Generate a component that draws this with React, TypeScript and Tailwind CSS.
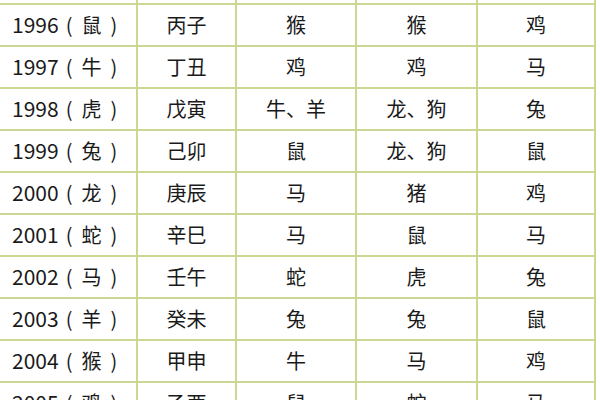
import React from "react";

const rows: string[][] = [
  ["1996", "鼠", "丙子", "猴", "猴", "鸡"],
  ["1997", "牛", "丁丑", "鸡", "鸡", "马"],
  ["1998", "虎", "戊寅", "牛、羊", "龙、狗", "兔"],
  ["1999", "兔", "己卯", "鼠", "龙、狗", "鼠"],
  ["2000", "龙", "庚辰", "马", "猪", "鸡"],
  ["2001", "蛇", "辛巳", "马", "鼠", "马"],
  ["2002", "马", "壬午", "蛇", "虎", "兔"],
  ["2003", "羊", "癸未", "兔", "兔", "鼠"],
  ["2004", "猴", "甲申", "牛", "马", "鸡"],
  ["2005", "鸡", "乙酉", "鼠", "蛇", "马"],
];

const cellCls =
  "flex items-center border-b-2 border-r-2 border-[#cdd693] text-[20px] text-[#1a1a1a]";

const Row = ({ cells }: { cells: string[] }) => (
  <div className="grid grid-cols-[138px_99px_120px_121px_118px] h-[42px]">
    <div className={`${cellCls} pl-3 justify-start`}>
      <span className="text-[21px]">{cells[0]}</span>
      <span className="ml-[7px]">(</span>
      <span className="mx-[9px]">{cells[1]}</span>
      <span>)</span>
    </div>
    {cells.slice(2).map((c, i) => (
      <div key={i} className={`${cellCls} justify-center`}>
        {c}
      </div>
    ))}
  </div>
);

const header = ["出生年份", "干支", "三合", "六合", "相害"];

const App = () => {
  return (
    <div className="w-[600px] h-[400px] overflow-hidden bg-white font-['Noto_Sans_CJK_SC',sans-serif]">
      <div className="flex flex-col w-[596px] bg-white">
        <div className="grid grid-cols-[138px_99px_120px_121px_118px] h-[42px] -mt-[37px]">
          {header.map((h, i) => (
            <div
              key={i}
              className={`${cellCls} ${i === 0 ? "pl-3 justify-start" : "justify-center"}`}
            >
              {h}
            </div>
          ))}
        </div>
        {rows.map((r) => (
          <Row key={r[0]} cells={r} />
        ))}
      </div>
    </div>
  );
};

export default App;
